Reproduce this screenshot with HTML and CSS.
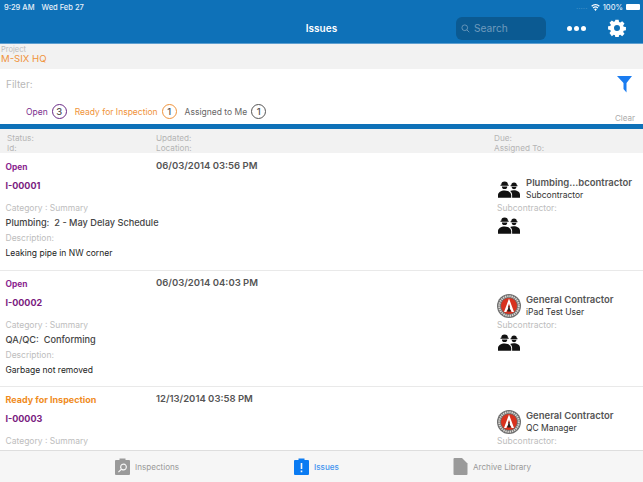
FILE: index.html
```html
<!DOCTYPE html>
<html lang="en">
<head>
    <meta charset="UTF-8">
    <meta name="viewport" content="width=device-width, initial-scale=1.0">
    <title>Issues</title>
    <link rel="stylesheet" href="styles.css">
</head>
<body>
    <svg class="sprites" width="0" height="0">
        <symbol id="crew" viewBox="0 0 24 18">
            <path d="M3.600 3.800a3.600 3.600 0 0 1 7.200 0h.9v1.100H2.700V3.800z"/>
            <path d="M4.300 5.600h5.800a2.900 2.900 0 0 1-5.800 0z"/>
            <path d="M14.500 4.400a3 3 0 0 1 6 0h.8v1h-7.600v-1z"/>
            <path d="M14.800 6.100h5.400a2.700 2.700 0 0 1-5.400 0z"/>
            <path d="M0 18v-2.800c0-3 3.300-5 7.200-5s7.200 2 7.200 5V18z"/>
            <path d="M15.400 18v-3c0-1.800-.8-3.200-2.200-4.300 1.100-.6 2.500-.9 3.900-.9 3.700 0 6.900 1.900 6.900 4.800V18z"/>
        </symbol>
        <symbol id="agc" viewBox="0 0 24 24">
            <circle cx="12" cy="12" r="12" fill="#6e6e6e"/>
            <circle cx="12" cy="12" r="9.800" fill="none" stroke="#d9d6d2" stroke-width="2" stroke-dasharray="1.400 .8"/>
            <circle cx="12" cy="12" r="8" fill="#d8321f"/>
            <path d="M12 4.500 17 18h-2.400l-.8-2.300h-3.600L9.400 18H7zM12 9.500l-1.200 4h2.400z" fill="#fff"/>
            <path d="M12 11l1.700 6.500h-3.400z" fill="#222"/>
        </symbol>
    </svg>

    <header class="top-bar">
        <div class="status-row">
            <span>9:29 AM</span>
            <span class="status-date">Wed Feb 27</span>
            <span class="status-right">
                <span class="signal">.....</span>
                <svg class="wifi" viewBox="0 0 16 12"><path d="M8 12 5.600 9a3.600 3.600 0 0 1 4.800 0zM4.500 7.700 3 5.900a7.600 7.600 0 0 1 10 0l-1.500 1.800a5.300 5.300 0 0 0-7 0zM1.900 4.600.4 2.800a11.600 11.600 0 0 1 15.200 0l-1.500 1.800a9.300 9.300 0 0 0-12.200 0z" fill="#fff"/></svg>
                <span>100%</span>
                <span class="battery"></span>
            </span>
        </div>
        <div class="nav-row">
            <div class="nav-title">Issues</div>
            <div class="search-box">
                <svg class="search-icon" viewBox="0 0 12 12"><circle cx="5" cy="5" r="3.800" fill="none" stroke="#7fa6c4" stroke-width="1"/><path d="M7.800 7.800 11 11" stroke="#7fa6c4" stroke-width="1"/></svg>
                <span>Search</span>
            </div>
            <div class="dots"><i></i><i></i><i></i></div>
            <svg class="gear" viewBox="0 0 24 24"><path fill="#fff" fill-rule="evenodd" d="M9.800 1h4.400l.5 3 1.700.7 2.500-1.800 3.100 3.100-1.800 2.500.7 1.700 3 .5v4.400l-3 .5-.7 1.700 1.800 2.500-3.100 3.100-2.500-1.800-1.700.7-.5 3H9.800l-.5-3-1.700-.7-2.500 1.800L2 18.800l1.800-2.500-.7-1.700-3-.5V9.700l3-.5.7-1.700L2 5l3.100-3.100 2.500 1.800 1.700-.7zM12 8a4 4 0 1 0 0 8 4 4 0 0 0 0-8z"/></svg>
        </div>
    </header>

    <section class="project-band">
        <div class="project-label">Project</div>
        <div class="project-name">M-SIX HQ</div>
    </section>

    <section class="filter-panel">
        <div class="filter-top">
            <span class="filter-label">Filter:</span>
            <svg class="funnel" viewBox="0 0 15 17"><path d="M0 0h15L9.500 7v9.500L6.500 13V7z" fill="#1a7cf0"/></svg>
        </div>
        <div class="filter-bottom">
            <span class="chip chip-open">Open <b>3</b></span>
            <span class="chip chip-ready">Ready for Inspection <b>1</b></span>
            <span class="chip chip-mine">Assigned to Me <b>1</b></span>
            <span class="clear-link">Clear</span>
        </div>
    </section>

    <div class="blue-rule"></div>

    <section class="col-head">
        <div>Status:<br>Id:</div>
        <div>Updated:<br>Location:</div>
        <div>Due:<br>Assigned To:</div>
    </section>

    <main class="issue-list">
        <article class="issue">
            <div class="issue-main">
                <div class="issue-status open">Open</div>
                <div class="issue-id">I-00001</div>
                <div class="field-label">Category : Summary</div>
                <div class="field-value">Plumbing:&nbsp; 2 - May Delay Schedule</div>
                <div class="field-label">Description:</div>
                <div class="field-text">Leaking pipe in NW corner</div>
            </div>
            <div class="issue-date">06/03/2014 03:56 PM</div>
            <div class="issue-side">
                <div class="person">
                    <svg class="avatar crew"><use href="#crew"/></svg>
                    <div>
                        <div class="person-name">Plumbing...bcontractor</div>
                        <div class="person-role">Subcontractor</div>
                    </div>
                </div>
                <div class="field-label side-label">Subcontractor:</div>
                <svg class="avatar crew"><use href="#crew"/></svg>
            </div>
        </article>

        <article class="issue">
            <div class="issue-main">
                <div class="issue-status open">Open</div>
                <div class="issue-id">I-00002</div>
                <div class="field-label">Category : Summary</div>
                <div class="field-value">QA/QC:&nbsp; Conforming</div>
                <div class="field-label">Description:</div>
                <div class="field-text">Garbage not removed</div>
            </div>
            <div class="issue-date">06/03/2014 04:03 PM</div>
            <div class="issue-side">
                <div class="person">
                    <svg class="avatar"><use href="#agc"/></svg>
                    <div>
                        <div class="person-name">General Contractor</div>
                        <div class="person-role">iPad Test User</div>
                    </div>
                </div>
                <div class="field-label side-label">Subcontractor:</div>
                <svg class="avatar crew"><use href="#crew"/></svg>
            </div>
        </article>

        <article class="issue">
            <div class="issue-main">
                <div class="issue-status ready">Ready for Inspection</div>
                <div class="issue-id">I-00003</div>
                <div class="field-label">Category : Summary</div>
            </div>
            <div class="issue-date">12/13/2014 03:58 PM</div>
            <div class="issue-side">
                <div class="person">
                    <svg class="avatar"><use href="#agc"/></svg>
                    <div>
                        <div class="person-name">General Contractor</div>
                        <div class="person-role">QC Manager</div>
                    </div>
                </div>
                <div class="field-label side-label">Subcontractor:</div>
            </div>
        </article>
    </main>

    <nav class="tab-bar">
        <div class="tab">
            <svg class="tab-icon" viewBox="0 0 15 17"><path fill="#9a9a9a" fill-rule="evenodd" d="M1 2h3.500V.5h6V2H14a1 1 0 0 1 1 1v13a1 1 0 0 1-1 1H1a1 1 0 0 1-1-1V3a1 1 0 0 1 1-1zm7.500 3.500a3.500 3.500 0 0 0-2.800 5.600L3 13.800l.8.800 2.700-2.700a3.500 3.500 0 1 0 2-6.400zm0 1.200a2.300 2.300 0 1 1 0 4.600 2.300 2.300 0 0 1 0-4.600z"/></svg>
            <span>Inspections</span>
        </div>
        <div class="tab tab-active">
            <svg class="tab-icon" viewBox="0 0 15 17"><path fill="#0a7bf2" fill-rule="evenodd" d="M1 2h3.500V.5h6V2H14a1 1 0 0 1 1 1v13a1 1 0 0 1-1 1H1a1 1 0 0 1-1-1V3a1 1 0 0 1 1-1zm5.700 3v6h1.600V5zm0 7.500v1.700h1.600v-1.700z"/></svg>
            <span>Issues</span>
        </div>
        <div class="tab">
            <svg class="tab-icon" viewBox="0 0 14 17"><path fill="#9a9a9a" d="M1 0h7.500L14 5.500V16a1 1 0 0 1-1 1H1a1 1 0 0 1-1-1V1a1 1 0 0 1 1-1z"/></svg>
            <span>Archive Library</span>
        </div>
    </nav>
</body>
</html>
```

FILE: styles.css
```css
* {
    margin: 0;
    padding: 0;
    box-sizing: border-box;
}

html, body {
    height: 100%;
}

body {
    font-family: 'Inter', 'Liberation Sans', sans-serif;
    color: #333;
    background-color: #fff;
    display: flex;
    flex-direction: column;
    overflow: hidden;
}

.sprites {
    display: none;
}

.top-bar {
    height: 44px;
    flex: none;
    background-color: #0e71b8;
    color: #fff;
    border-bottom: 1px solid #5e9fd0;
}

.status-row {
    height: 13px;
    padding: 1px 3px 0 4px;
    display: flex;
    align-items: center;
    font-size: 7.500px;
    font-weight: 500;
    color: #e6f0f8;
}

.status-date {
    margin-left: 7px;
}

.status-right {
    margin-left: auto;
    display: flex;
    align-items: center;
    gap: 3px;
}

.signal {
    opacity: 0.4;
    letter-spacing: 0.5px;
    margin-top: -1px;
    font-size: 6px;
}

.wifi {
    width: 9px;
    height: 7px;
}

.battery {
    width: 14px;
    height: 6px;
    background-color: #fff;
    border-radius: 1px;
}

.nav-row {
    position: relative;
    height: 30px;
    display: flex;
    align-items: center;
}

.nav-title {
    position: absolute;
    left: 0;
    width: 100%;
    top: 9px;
    text-align: center;
    font-size: 10px;
    font-weight: 600;
}

.search-box {
    position: relative;
    width: 90px;
    height: 23px;
    margin-left: 456px;
    padding-left: 5px;
    display: flex;
    align-items: center;
    gap: 4px;
    background-color: #0b5a92;
    border-radius: 6px;
    color: #6f9bbd;
    font-size: 10.200px;
}

.search-icon {
    width: 9px;
    height: 9px;
}

.dots {
    position: relative;
    margin-left: 21px;
    display: flex;
    gap: 2px;
}

.dots i {
    width: 5px;
    height: 5px;
    border-radius: 50%;
    background-color: #fff;
}

.gear {
    position: relative;
    width: 18px;
    height: 18px;
    margin-left: 22px;
}

.project-band {
    height: 25px;
    flex: none;
    background-color: #f2f2f2;
    padding: 2px 1px 0;
}

.project-label {
    font-size: 7.500px;
    line-height: 8px;
    color: #bbb;
}

.project-name {
    font-size: 9.600px;
    line-height: 10px;
    color: #f0933a;
}

.filter-panel {
    height: 55px;
    flex: none;
    padding-left: 6px;
    display: flex;
    flex-direction: column;
}

.filter-top {
    height: 30px;
    padding: 7px 11px 0 0;
    display: flex;
    justify-content: space-between;
}

.filter-label {
    font-size: 10px;
    line-height: 16px;
    color: #b8b8b8;
}

.funnel {
    width: 15px;
    height: 17px;
}

.filter-bottom {
    display: flex;
    align-items: center;
    height: 25px;
    padding-left: 20px;
    padding-right: 8px;
    gap: 8px;
    font-size: 8.500px;
}

.chip {
    display: flex;
    align-items: center;
    gap: 4px;
}

.chip b {
    width: 15px;
    height: 15px;
    border: 1.500px solid;
    border-radius: 50%;
    display: flex;
    align-items: center;
    justify-content: center;
    font-size: 9.500px;
    font-weight: 500;
    color: #555;
}

.chip-open {
    color: #7b2d8e;
}

.chip-ready {
    color: #f0933a;
}

.chip-mine {
    color: #666;
}

.chip-open b {
    border-color: #6a2a86;
}

.chip-ready b {
    border-color: #f0933a;
}

.chip-mine b {
    border-color: #555;
}

.clear-link {
    margin-left: auto;
    margin-top: 13px;
    font-size: 8px;
    color: #aaa;
}

.blue-rule {
    height: 5px;
    flex: none;
    background-color: #0e71b8;
}

.col-head {
    height: 25px;
    flex: none;
    background-color: #f2f2f2;
    border-bottom: 1px solid #fff;
    padding: 4px 0 0 7px;
    display: grid;
    grid-template-columns: 149px 338px 1fr;
    font-size: 8.200px;
    line-height: 10px;
    color: #b5b5b5;
}

.issue-list {
    flex: 1;
    min-height: 0;
    overflow: hidden;
}

.issue {
    height: 116.500px;
    padding-top: 8px;
    border-bottom: 1px solid #e9e9e9;
    display: grid;
    grid-template-columns: 156px 341px 1fr;
}

.issue-main {
    padding-left: 5.500px;
    white-space: nowrap;
}

.issue-status {
    font-size: 8.400px;
    line-height: 10px;
    font-weight: 700;
}

.open {
    color: #8a1f8f;
}

.ready {
    color: #f08c1e;
    font-size: 9px;
}

.issue-id {
    margin-top: 9px;
    font-size: 9px;
    line-height: 10px;
    font-weight: 700;
    color: #7a1a80;
}

.field-label {
    font-size: 8.500px;
    line-height: 15px;
    color: #bdbdbd;
}

.issue-main .field-label:nth-child(3) {
    margin-top: 10px;
}

.field-value {
    margin-top: -1px;
    margin-bottom: 1px;
    font-size: 9.200px;
    line-height: 15px;
    font-weight: 500;
    color: #444;
}

.field-text {
    font-size: 8.500px;
    line-height: 15px;
    color: #222;
}

.issue-date {
    font-size: 9.500px;
    line-height: 10px;
    margin-top: -1px;
    font-weight: 600;
    color: #555;
}

.issue-side {
    padding-top: 14px;
}

.person {
    display: flex;
    align-items: center;
    gap: 5px;
}

.avatar {
    display: block;
    width: 24px;
    height: 24px;
    flex: none;
}

.crew {
    width: 22px;
    height: 17px;
    margin: 0 1px;
    fill: #111;
}

.person-name {
    font-size: 9.500px;
    line-height: 13px;
    font-weight: 600;
    color: #555;
    white-space: nowrap;
}

.person-role {
    font-size: 8.500px;
    line-height: 13px;
    color: #333;
}

.side-label {
    line-height: 13px;
    margin-bottom: 2px;
}

.tab-bar {
    position: absolute;
    left: 0;
    right: 0;
    bottom: 0;
    height: 32px;
    background-color: #f6f6f6;
    border-top: 1px solid #dedede;
    display: grid;
    grid-template-columns: 179px 159px 1fr;
    padding-left: 115px;
    align-items: center;
}

.tab {
    display: flex;
    align-items: center;
    gap: 5px;
    font-size: 8.100px;
    color: #999;
}

.tab-icon {
    width: 15px;
    height: 17px;
}

.tab-active {
    color: #3f93ef;
    font-weight: 500;
}
```
